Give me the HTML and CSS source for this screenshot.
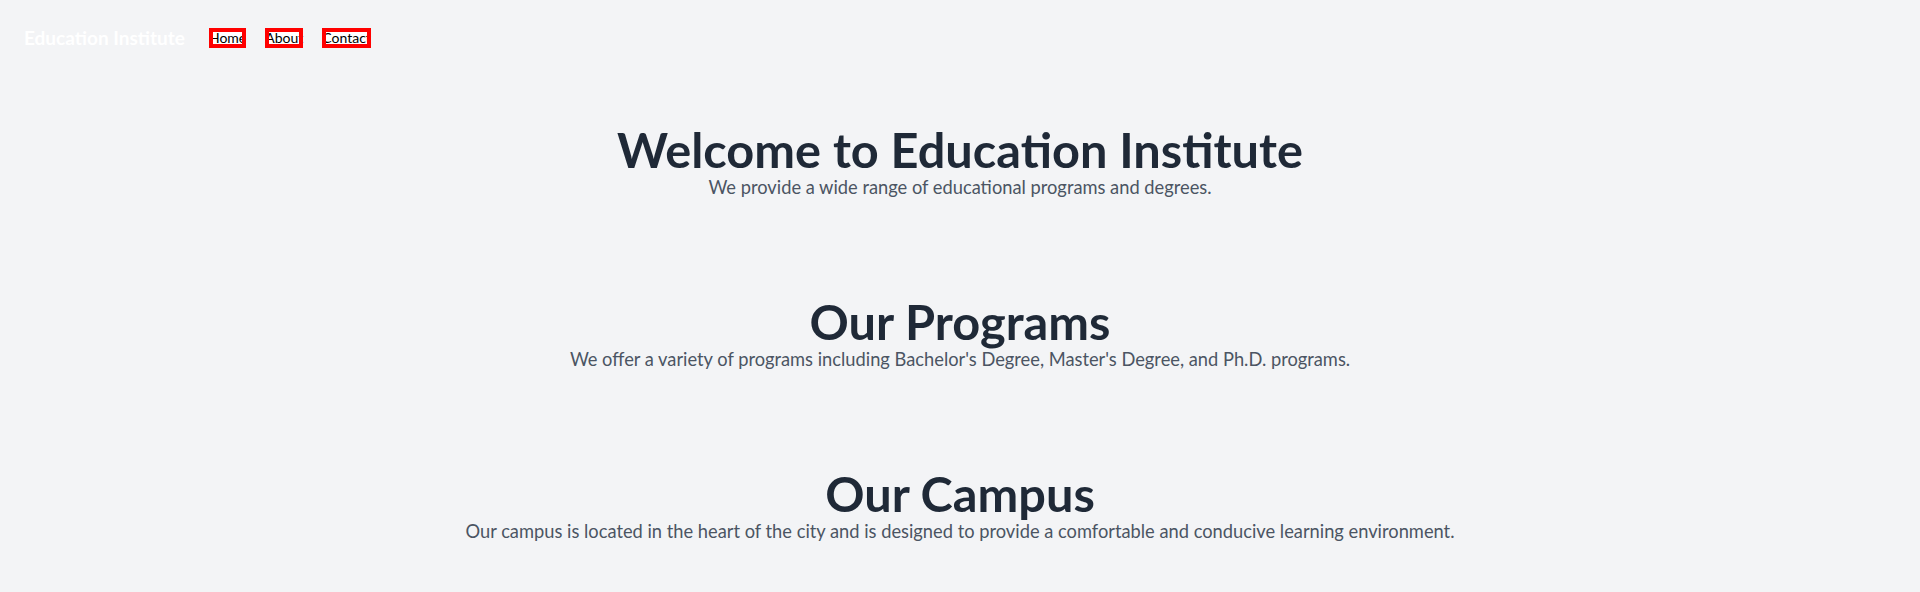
FILE: index.html
```html
<!DOCTYPE html>
<html lang="en">
<head>
<meta charset="utf-8">
<title>Education Institute</title>
<link rel="stylesheet" href="styles.css">
</head>
<body>
<nav class="nav">
  <div class="logo">Education Institute</div>
  <ul class="links">
    <li><a class="link" href="#">Home</a></li>
    <li><a class="link" href="#">About</a></li>
    <li><a class="link" href="#">Contact</a></li>
  </ul>
</nav>
<main>
  <section class="section">
    <h1 class="title">Welcome to Education Institute</h1>
    <p class="text">We provide a wide range of educational programs and degrees.</p>
  </section>
  <section class="section">
    <h2 class="title">Our Programs</h2>
    <p class="text">We offer a variety of programs including Bachelor's Degree, Master's Degree, and Ph.D. programs.</p>
  </section>
  <section class="section">
    <h2 class="title">Our Campus</h2>
    <p class="text">Our campus is located in the heart of the city and is designed to provide a comfortable and conducive learning environment.</p>
  </section>
</main>
</body>
</html>
```

FILE: styles.css
```css
* { box-sizing: border-box; }
html, body {
  margin: 0;
  padding: 0;
  background: #f3f4f6;
  font-family: Lato, "Open Sans", sans-serif;
}
.nav {
  display: flex;
  align-items: center;
  padding: 24px;
  height: 76px;
}
.logo {
  color: #ffffff;
  font-size: 19px;
  line-height: 28px;
  font-weight: 700;
}
.links {
  display: flex;
  gap: 19px;
  list-style: none;
  margin: 0 0 0 24px;
  padding: 0;
}
.link {
  display: block;
  height: 20px;
  line-height: 20px;
  font-size: 14px;
  color: #000;
  text-decoration: none;
  background: #ffffff;
  outline: 4px solid #ff0000;
  outline-offset: -4px;
}
.section {
  padding: 49px 0 47px;
  text-align: center;
}
.title {
  margin: 0;
  font-size: 48.7px;
  line-height: 48px;
  font-weight: 700;
  color: #1f2937;
}
.text {
  margin: 0;
  font-size: 18.3px;
  line-height: 28px;
  color: #4b5563;
}
```
